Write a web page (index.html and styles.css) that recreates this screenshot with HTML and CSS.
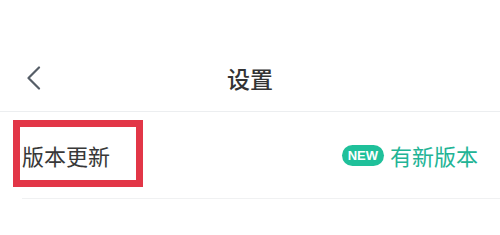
FILE: index.html
```html
<!DOCTYPE html>
<html lang="zh-CN">
<head>
    <meta charset="UTF-8">
    <meta name="viewport" content="width=device-width, initial-scale=1.0">
    <title>设置</title>
    <link rel="stylesheet" href="styles.css">
</head>
<body>
    <div class="page">
        <div class="header">
            <span class="back">
                <svg width="16" height="24" viewBox="0 0 16 24">
                    <path d="M13 1.5 L2.5 12 L13 22.5" fill="none" stroke="#565e67" stroke-width="2.2" stroke-linecap="round" stroke-linejoin="round"/>
                </svg>
            </span>
            <h1>设置</h1>
        </div>
        <div class="row">
            <span class="label">版本更新</span>
            <div class="status">
                <span class="badge">NEW</span>
                <span class="status-text">有新版本</span>
            </div>
            <!-- marca vermelha da captura -->
            <div class="highlight"></div>
        </div>
    </div>
</body>
</html>
```
FILE: styles.css
```css
body {
    margin: 0;
    padding: 0;
    background-color: #fff;
    font-family: "Noto Sans CJK SC", "Noto Sans", sans-serif;
    color: #333;
}
.page {
    padding-top: 45px;
}
.header {
    position: relative;
    height: 66px;
    display: flex;
    justify-content: center;
    align-items: center;
    border-bottom: 1px solid #eceef0;
}
.back {
    position: absolute;
    left: 26px;
    top: 21px;
    display: flex;
}
.header h1 {
    margin: 0;
    font-size: 23px;
    font-weight: 500;
    color: #333;
}
.row {
    position: relative;
    height: 86px;
    margin-left: 22px;
    padding-right: 22px;
    display: flex;
    align-items: center;
    justify-content: space-between;
    border-bottom: 1px solid #f0f1f2;
}
.label {
    font-size: 22px;
    color: #383838;
}
.status {
    display: flex;
    align-items: center;
    gap: 6px;
}
.badge {
    height: 21px;
    line-height: 21px;
    padding: 0 6px;
    border-radius: 11px;
    background-color: #1fc09a;
    color: #fff;
    font-family: "Liberation Sans", Arial, sans-serif;
    font-size: 13px;
    font-weight: bold;
}
.status-text {
    font-size: 22px;
    color: #22b495;
}
.highlight {
    position: absolute;
    left: -9px;
    top: 8px;
    width: 116px;
    height: 53px;
    border: 7px solid #e23647;
}
```
